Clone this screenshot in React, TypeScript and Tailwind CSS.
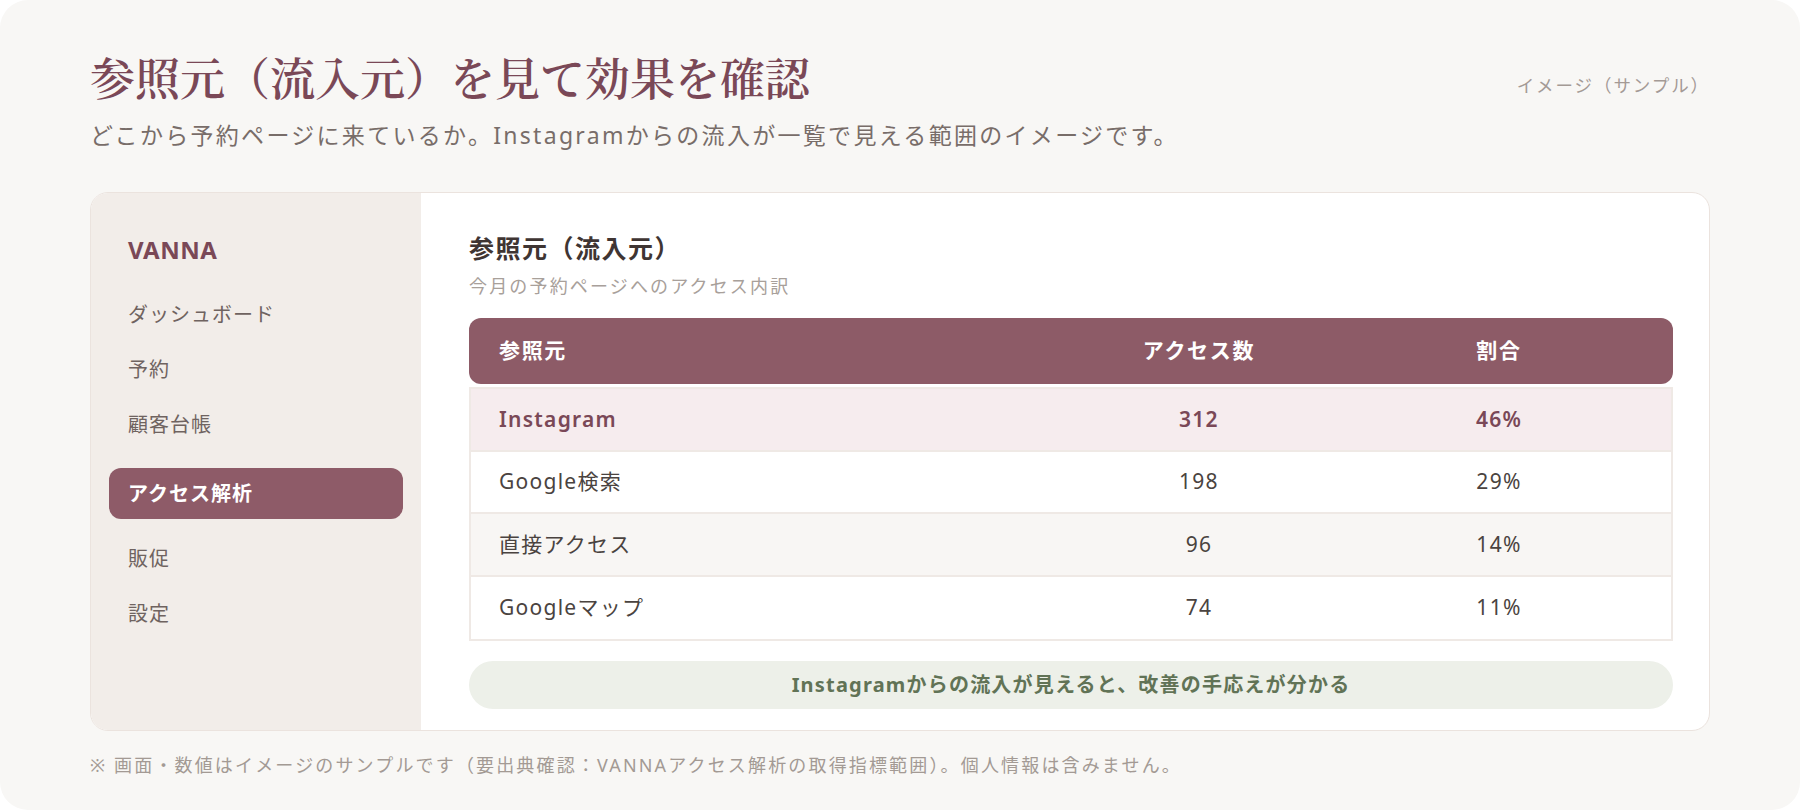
const nav = ["ダッシュボード", "予約", "顧客台帳", "アクセス解析", "販促", "設定"];
const active = "アクセス解析";

const rows = [
  { name: "Instagram", count: 312, rate: "46%", hi: true },
  { name: "Google検索", count: 198, rate: "29%" },
  { name: "直接アクセス", count: 96, rate: "14%", alt: true },
  { name: "Googleマップ", count: 74, rate: "11%" },
];

export default function App() {
  return (
    <div className="w-[1800px] h-[810px] bg-white font-['Noto_Sans','Noto_Sans_CJK_JP',sans-serif]">
      <div className="h-full rounded-[28px] bg-[#f8f7f5] px-[90px] pt-[51px]">
        {/* page header */}
        <div className="flex items-start justify-between">
          <div>
            <h1 className="text-[45px] leading-[52px] font-semibold text-[#7a4857] font-['Noto_Serif_CJK_JP','Noto_Sans_CJK_JP',serif]">
              参照元（流入元）を見て効果を確認
            </h1>
            <p className="mt-4 text-[23px] leading-[32px] tracking-[0.1em] text-[#786d69]">
              どこから予約ページに来ているか。Instagramからの流入が一覧で見える範囲のイメージです。
            </p>
          </div>
          <div className="mt-[22px] text-[17.5px] leading-6 tracking-[0.11em] text-[#a49a95]">
            イメージ（サンプル）
          </div>
        </div>

        {/* panel */}
        <div className="mt-[41px] h-[539px] flex rounded-[18px] border border-[#ebe3de] bg-white overflow-hidden">
          <aside className="w-[330px] shrink-0 bg-[#f2ede9] px-[18px] pt-[41px]">
            <div className="pl-[19px] text-[24px] leading-8 font-bold tracking-[0.02em] text-[#7a4857]">
              VANNA
            </div>
            <ul className="mt-[21px]">
              {nav.map((n) =>
                n === active ? (
                  <li
                    key={n}
                    className="mt-[16px] mb-[12px] h-[51px] flex items-center rounded-xl bg-[#8e5b68] pl-[19px] text-[20px] font-bold tracking-[0.05em] text-white"
                  >
                    {n}
                  </li>
                ) : (
                  <li
                    key={n}
                    className="h-[55px] flex items-center pl-[19px] text-[20px] tracking-[0.05em] text-[#6f6360]"
                  >
                    {n}
                  </li>
                )
              )}
            </ul>
          </aside>

          <main className="flex-1 pl-12 pr-9 pt-[39px]">
            <h2 className="text-[25px] leading-8 font-bold tracking-[0.06em] text-[#3f3533]">
              参照元（流入元）
            </h2>
            <p className="mt-[10px] text-[18px] leading-6 tracking-[0.12em] text-[#a8a09a]">
              今月の予約ページへのアクセス内訳
            </p>

            <div className="mt-5 h-[66px] grid grid-cols-[1fr_300px_300px] items-center rounded-xl bg-[#8d5b67] pl-[30px] pr-6 text-[21px] font-bold tracking-[0.08em] text-white">
              <div>参照元</div>
              <div className="text-center">アクセス数</div>
              <div className="text-center">割合</div>
            </div>

            <div className="mt-[3px] border-2 border-[#efe9e5] divide-y-2 divide-[#efe9e5]">
              {rows.map((r) => (
                <div
                  key={r.name}
                  className={`h-[62.5px] grid grid-cols-[1fr_300px_300px] items-center pl-[28px] pr-[22px] text-[21px] tracking-[0.06em] ${
                    r.hi
                      ? "bg-[#f6ecee] font-semibold text-[#7a4857]"
                      : r.alt
                      ? "bg-[#f8f6f4] text-[#4a4340]"
                      : "bg-white text-[#4a4340]"
                  }`}
                >
                  <div>{r.name}</div>
                  <div className="text-center">{r.count}</div>
                  <div className="text-center">{r.rate}</div>
                </div>
              ))}
            </div>

            <div className="mt-[20px] h-12 flex items-center justify-center rounded-full bg-[#edf0e9] text-[20px] font-bold tracking-[0.06em] text-[#617356]">
              Instagramからの流入が見えると、改善の手応えが分かる
            </div>
          </main>
        </div>

        <p className="mt-[21px] text-[18px] leading-[26px] tracking-[0.12em] text-[#a39a94]">
          ※ 画面・数値はイメージのサンプルです（要出典確認：VANNAアクセス解析の取得指標範囲）。個人情報は含みません。
        </p>
      </div>
    </div>
  );
}
